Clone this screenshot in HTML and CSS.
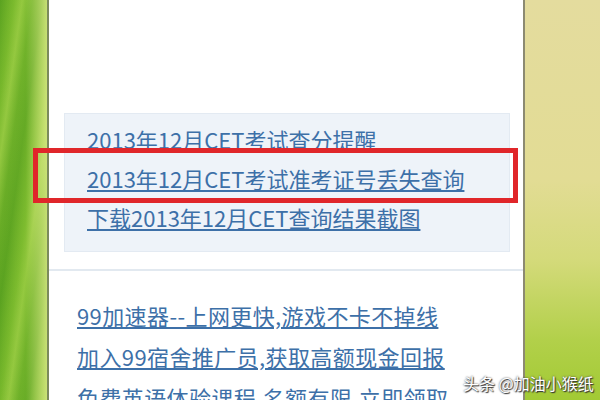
FILE: index.html
```html
<!DOCTYPE html>
<html>
<head>
	<meta charset="utf-8">
	<link rel="stylesheet" href="styles.css">
</head>
<body>
	<div class="leftStrip"></div>

	<div class="panel">
		<div class="cetBox">
			<a href="#">2013年12月CET考试查分提醒</a>
			<a href="#">2013年12月CET考试准考证号丢失查询</a>
			<a href="#">下载2013年12月CET查询结果截图</a>
		</div>

		<div class="adLinks">
			<a href="#">99加速器--上网更快,游戏不卡不掉线</a>
			<a href="#">加入99宿舍推广员,获取高额现金回报</a>
			<a href="#">免费英语体验课程,名额有限,立即领取</a>
		</div>
	</div>

	<div class="rightStrip"></div>

	<div class="markBox"></div>
	<div class="watermark">头条 @加油小猴纸</div>
</body>
</html>
```

FILE: styles.css
```css
	body,
	html {
		margin: 0;
		padding: 0;
		width: 600px;
		height: 400px;
		overflow: hidden;
	}

	body {
		display: flex;
		position: relative;
		font-family: "Noto Sans CJK SC", "Liberation Sans", sans-serif;
	}

	.leftStrip {
		width: 47px;
		background:
			linear-gradient(90deg, rgba(120,190,40,0) 0%, rgba(150,205,60,0.2) 55%, rgba(215,232,130,0.85) 100%),
			repeating-linear-gradient(98deg, #5aa220 0px, #78b82c 14px, #94c840 22px, #68ac26 32px, #5aa220 42px);
		border-right: 2px solid #7b8a5c;
	}

	.panel {
		width: 476px;
		background-color: #ffffff;
		border-right: 2px solid #8c8a72;
		padding-top: 113px;
		box-sizing: border-box;
	}

	.cetBox {
		margin: 0 13px 0 15px;
		height: 139px;
		box-sizing: border-box;
		background-color: #eef3f9;
		border: 1px solid #e3eaf2;
		padding: 6px 0 0 22px;
		display: flex;
		flex-direction: column;
	}

	a {
		color: #3d70a8;
		text-decoration: underline;
		font-size: 22px;
		white-space: nowrap;
	}

	.cetBox a {
		line-height: 39px;
	}

	.adLinks {
		margin-top: 17px;
		border-top: 2px solid #e2e9f0;
		padding: 24px 0 0 28px;
		display: flex;
		flex-direction: column;
	}

	.adLinks a {
		line-height: 41px;
		letter-spacing: 0.4px;
	}

	.rightStrip {
		flex: 1;
		background: linear-gradient(180deg, #e4dc9e 0%, #e2dc94 45%, #d4da7a 65%, #b2d04a 85%, #a2ca34 100%);
	}

	.markBox {
		position: absolute;
		left: 33px;
		top: 148px;
		width: 485px;
		height: 55px;
		box-sizing: border-box;
		border: 5px solid #e0262a;
	}

	.watermark {
		position: absolute;
		left: 463px;
		top: 371px;
		color: #ffffff;
		font-size: 16px;
		text-shadow: 0 0 2px #333333, 1px 1px 1px #333333;
	}
```
